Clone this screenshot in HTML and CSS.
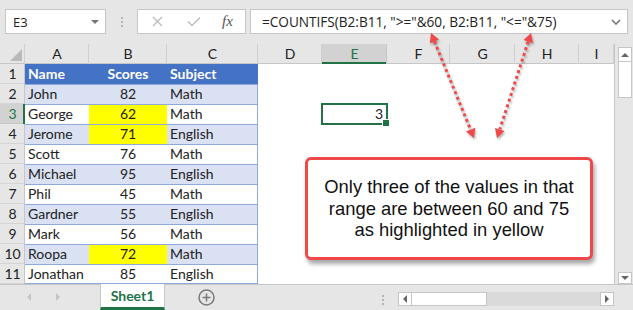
FILE: index.html
```html
<!DOCTYPE html>
<html lang="en">

<head>
  <meta charset="UTF-8">
  <meta name="viewport" content="width=device-width, initial-scale=1.0">
  <link rel="stylesheet" href="styles.css">
  <title>COUNTIFS between two values</title>
</head>

<body>

  <div class="window">

    <div class="formula-bar">
      <div class="name-box">
        <span>E3</span>
        <span class="caret"></span>
      </div>
      <div class="grip"><i></i><i></i><i></i></div>
      <div class="fx-buttons">
        <svg class="icon-x" width="11" height="11" viewBox="0 0 11 11">
          <path d="M1 1 L10 10 M10 1 L1 10" />
        </svg>
        <svg class="icon-check" width="14" height="11" viewBox="0 0 14 11">
          <path d="M1 5.5 L5 9.5 L13 1.5" />
        </svg>
        <span class="fx">fx</span>
      </div>
      <div class="formula-input">
        <span class="formula">=COUNTIFS(B2:B11, "&gt;="&amp;60, B2:B11, "&lt;="&amp;75)</span>
        <svg class="chevron" width="10" height="6" viewBox="0 0 10 6">
          <path d="M1 1 L5 5 L9 1" />
        </svg>
      </div>
    </div>

    <div class="main">
      <table class="sheet">
        <colgroup>
          <col style="width:25px">
          <col style="width:64px">
          <col style="width:78px">
          <col style="width:91px">
          <col style="width:64px">
          <col style="width:65px">
          <col style="width:63px">
          <col style="width:65px">
          <col style="width:64px">
          <col style="width:35px">
        </colgroup>
        <tr class="col-heads">
          <th class="corner"></th>
          <th>A</th>
          <th>B</th>
          <th>C</th>
          <th>D</th>
          <th class="active">E</th>
          <th>F</th>
          <th>G</th>
          <th>H</th>
          <th>I</th>
        </tr>
        <tr class="head">
          <th class="rh">1</th>
          <td class="x a">Name</td>
          <td class="x num">Scores</td>
          <td class="x c">Subject</td>
          <td></td><td></td><td></td><td></td><td></td><td></td>
        </tr>
        <tr class="band">
          <th class="rh">2</th>
          <td class="x a">John</td>
          <td class="x num">82</td>
          <td class="x c">Math</td>
          <td></td><td></td><td></td><td></td><td></td><td></td>
        </tr>
        <tr>
          <th class="rh active">3</th>
          <td class="x a">George</td>
          <td class="x num hl">62</td>
          <td class="x c">Math</td>
          <td></td>
          <td class="sel">3</td>
          <td></td><td></td><td></td><td></td>
        </tr>
        <tr class="band">
          <th class="rh">4</th>
          <td class="x a">Jerome</td>
          <td class="x num hl">71</td>
          <td class="x c">English</td>
          <td></td><td></td><td></td><td></td><td></td><td></td>
        </tr>
        <tr>
          <th class="rh">5</th>
          <td class="x a">Scott</td>
          <td class="x num">76</td>
          <td class="x c">Math</td>
          <td></td><td></td><td></td><td></td><td></td><td></td>
        </tr>
        <tr class="band">
          <th class="rh">6</th>
          <td class="x a">Michael</td>
          <td class="x num">95</td>
          <td class="x c">English</td>
          <td></td><td></td><td></td><td></td><td></td><td></td>
        </tr>
        <tr>
          <th class="rh">7</th>
          <td class="x a">Phil</td>
          <td class="x num">45</td>
          <td class="x c">Math</td>
          <td></td><td></td><td></td><td></td><td></td><td></td>
        </tr>
        <tr class="band">
          <th class="rh">8</th>
          <td class="x a">Gardner</td>
          <td class="x num">55</td>
          <td class="x c">English</td>
          <td></td><td></td><td></td><td></td><td></td><td></td>
        </tr>
        <tr>
          <th class="rh">9</th>
          <td class="x a">Mark</td>
          <td class="x num">56</td>
          <td class="x c">Math</td>
          <td></td><td></td><td></td><td></td><td></td><td></td>
        </tr>
        <tr class="band">
          <th class="rh">10</th>
          <td class="x a">Roopa</td>
          <td class="x num hl">72</td>
          <td class="x c">Math</td>
          <td></td><td></td><td></td><td></td><td></td><td></td>
        </tr>
        <tr class="last">
          <th class="rh">11</th>
          <td class="x a">Jonathan</td>
          <td class="x num">85</td>
          <td class="x c">English</td>
          <td></td><td></td><td></td><td></td><td></td><td></td>
        </tr>
      </table>

      <div class="vscroll">
        <div class="sb-btn"><span class="tri-up"></span></div>
        <div class="sb-thumb"></div>
        <div class="sb-track"></div>
        <div class="sb-btn sb-down"><span class="tri-down"></span></div>
      </div>
    </div>

    <div class="tab-bar">
      <div class="tab-nav">
        <span class="tri-left"></span>
        <span class="tri-right"></span>
      </div>
      <div class="tab">Sheet1</div>
      <div class="add-sheet">
        <svg width="17" height="17" viewBox="0 0 17 17">
          <circle cx="8.5" cy="8.5" r="7.5" />
          <path d="M8.5 4.5 V12.5 M4.5 8.5 H12.5" />
        </svg>
      </div>
      <div class="grip grip-h"><i></i><i></i><i></i></div>
      <div class="hscroll">
        <div class="sb-btn"><span class="tri-left dark"></span></div>
        <div class="sb-thumb-h"></div>
        <div class="sb-track"></div>
        <div class="sb-btn"><span class="tri-right dark"></span></div>
      </div>
    </div>

    <!-- annotation layer -->
    <svg class="arrows" width="633" height="310" viewBox="0 0 633 310">
      <g class="arrow">
        <line x1="434.4" y1="41.3" x2="470.6" y2="129.7" />
        <polygon points="431,33 439,39.4 429.8,43.2" />
        <polygon points="474,138 475.2,127.8 466,131.6" />
      </g>
      <g class="arrow">
        <line x1="528.2" y1="41.6" x2="499.8" y2="129.4" />
        <polygon points="531,33 533,43.1 523.5,40" />
        <polygon points="497,138 504.5,131 495,127.9" />
      </g>
    </svg>

    <div class="note">
      <p>Only three of the values in that range are between 60 and 75 as highlighted in yellow</p>
    </div>

  </div>

</body>

</html>
```

FILE: styles.css
```css
* {
  margin: 0;
  padding: 0;
  box-sizing: border-box;
}

body {
  background-color: #e6e6e6;
  font-family: 'Lato', 'Liberation Sans', sans-serif;
  color: #222;
}

.window {
  position: relative;
  width: 633px;
  height: 310px;
  overflow: hidden;
  background-color: #e6e6e6;
}

/* formula bar */

.formula-bar {
  display: flex;
  align-items: flex-start;
  height: 44px;
  padding: 9px 0 0 5px;
  font-family: 'Open Sans', 'Liberation Sans', sans-serif;
  font-size: 13px;
}

.name-box {
  display: flex;
  align-items: center;
  justify-content: space-between;
  width: 101px;
  height: 25px;
  padding: 0 6px 0 7px;
  background: #fff;
  border: 1px solid #c6c6c6;
}

.caret {
  width: 0;
  height: 0;
  border-left: 4px solid transparent;
  border-right: 4px solid transparent;
  border-top: 4px solid #777;
}

.grip {
  display: flex;
  flex-direction: column;
  gap: 2px;
  margin: 8px 14px 0 15px;
}

.grip i {
  width: 2px;
  height: 2px;
  background: #b4b4b4;
}

.fx-buttons {
  display: flex;
  align-items: center;
  width: 109px;
  height: 25px;
  padding-left: 14px;
  background: #fff;
  border: 1px solid #c6c6c6;
}

.icon-x path,
.icon-check path {
  fill: none;
  stroke: #bdbdbd;
  stroke-width: 1.4;
}

.icon-check {
  margin-left: 24px;
}

.fx {
  margin-left: 21px;
  font-family: 'Liberation Serif', serif;
  font-style: italic;
  font-size: 15px;
  color: #555;
}

.formula-input {
  display: flex;
  align-items: center;
  justify-content: space-between;
  width: 378px;
  height: 25px;
  margin-left: 4px;
  padding: 0 6px 0 11px;
  background: #fff;
  border: 1px solid #c6c6c6;
  white-space: nowrap;
}

.formula {
  font-size: 13.6px;
}

.chevron path {
  fill: none;
  stroke: #777;
  stroke-width: 1.6;
}

/* grid */

.main {
  display: flex;
  height: 240px;
}

.sheet {
  width: 614px;
  table-layout: fixed;
  border-collapse: separate;
  border-spacing: 0;
  background: #fff;
  font-size: 14px;
}

.sheet th,
.sheet td {
  height: 20px;
  padding: 0 3px;
  white-space: nowrap;
  overflow: hidden;
  text-align: left;
  font-weight: normal;
  line-height: 20px;
}

.col-heads th {
  text-align: center;
  background: #e6e6e6;
  box-shadow: inset -1px 0 #d0d0d0, inset 0 -1px #c6c6c6;
}

.col-heads th.active {
  background: #d2d2d2;
  color: #217346;
  box-shadow: inset -1px 0 #c6c6c6, inset 0 -2px #217346;
}

.corner {
  position: relative;
}

.corner::after {
  content: '';
  position: absolute;
  right: 3px;
  bottom: 3px;
  border-left: 12px solid transparent;
  border-bottom: 12px solid #b9b9b9;
}

.sheet th.rh {
  padding: 0;
  text-align: center;
  background: #e6e6e6;
  box-shadow: inset -1px 0 #c6c6c6, inset 0 -1px #d4d4d4;
}

.sheet th.rh.active {
  background: #d2d2d2;
  color: #217346;
  box-shadow: inset -2px 0 #217346, inset 0 -1px #c6c6c6;
}

.x {
  box-shadow: inset 0 1px #8ea9db;
}

.x.c {
  box-shadow: inset -1px 1px #8ea9db;
}

.last .x {
  box-shadow: inset 0 1px #8ea9db, inset 0 -1px #8ea9db;
}

.last .x.c {
  box-shadow: inset -1px 1px #8ea9db, inset 0 -1px #8ea9db;
}

.sheet td.num {
  text-align: center;
}

.head td.x {
  background: #4472c4;
  color: #fff;
  font-weight: bold;
  box-shadow: none;
}

.band td.x {
  background: #d9e1f2;
}

.sheet td.hl {
  background: #ffff00;
}

.sheet td.sel {
  position: relative;
  overflow: visible;
  padding-right: 4px;
  text-align: right;
  outline: 2px solid #217346;
  outline-offset: -1px;
}

.sel::after {
  content: '';
  position: absolute;
  right: -3px;
  bottom: -3px;
  width: 6px;
  height: 6px;
  background: #217346;
  border: 1px solid #fff;
}

/* scrollbars */

.vscroll {
  display: flex;
  flex-direction: column;
  width: 19px;
  padding: 3px 1px 0 4px;
  background: #e6e6e6;
  box-shadow: inset 1px 0 #c6c6c6;
}

.sb-btn {
  display: flex;
  align-items: center;
  justify-content: center;
  width: 14px;
  height: 15px;
  background: #fff;
  border: 1px solid #c6c6c6;
}

.sb-thumb {
  height: 37px;
  margin-top: -1px;
  background: #fff;
  border: 1px solid #c6c6c6;
}

.sb-track {
  flex: 1;
}

.sb-down {
  height: 12px;
}

.tri-up,
.tri-down {
  width: 0;
  height: 0;
  border-left: 4px solid transparent;
  border-right: 4px solid transparent;
}

.tri-up {
  border-bottom: 4px solid #666;
}

.tri-down {
  border-top: 4px solid #666;
}

.tri-left,
.tri-right {
  width: 0;
  height: 0;
  border-top: 4px solid transparent;
  border-bottom: 4px solid transparent;
}

.tri-left {
  border-right: 4px solid #c4c4c4;
}

.tri-right {
  border-left: 4px solid #c4c4c4;
}

.tri-left.dark {
  border-right-color: #666;
}

.tri-right.dark {
  border-left-color: #666;
}

/* sheet tabs */

.tab-bar {
  display: flex;
  align-items: flex-start;
  height: 26px;
  box-shadow: inset 0 1px #c6c6c6;
}

.tab-nav {
  display: flex;
  align-items: center;
  gap: 25px;
  width: 100px;
  height: 26px;
  padding-left: 27px;
}

.tab {
  width: 65px;
  height: 26px;
  padding-top: 3px;
  text-align: center;
  font-weight: bold;
  font-size: 14px;
  color: #217346;
  background: #fff;
  border-left: 1px solid #c6c6c6;
  border-right: 1px solid #c6c6c6;
  border-bottom: 3px solid #217346;
}

.add-sheet {
  margin: 5px 0 0 33px;
}

.add-sheet circle,
.add-sheet path {
  fill: none;
  stroke: #7a7a7a;
  stroke-width: 1.5;
}

.grip-h {
  margin: 11px 14px 0 167px;
}

.hscroll {
  display: flex;
  width: 216px;
  height: 14px;
  margin-top: 8px;
  background: #dadada;
}

.hscroll .sb-btn {
  height: 14px;
}

.sb-thumb-h {
  width: 76px;
  margin-left: -1px;
  background: #fff;
  border: 1px solid #c6c6c6;
}

/* annotation */

.arrows {
  position: absolute;
  top: 0;
  left: 0;
  filter: drop-shadow(1px 2px 1px rgba(0, 0, 0, 0.3));
}

.arrow line {
  stroke: #f04848;
  stroke-width: 3;
  stroke-dasharray: 3 3;
}

.arrow polygon {
  fill: #f04848;
}

.note {
  position: absolute;
  left: 305px;
  top: 157px;
  width: 288px;
  height: 103px;
  display: flex;
  align-items: center;
  justify-content: center;
  padding: 0 14px;
  background: #fff;
  border: 3px solid #f04848;
  border-radius: 6px;
  box-shadow: 2px 4px 4px rgba(0, 0, 0, 0.35);
}

.note p {
  text-align: center;
  font-family: 'Liberation Sans', Arial, sans-serif;
  font-size: 18.4px;
  line-height: 21.5px;
  color: #111;
}
```
